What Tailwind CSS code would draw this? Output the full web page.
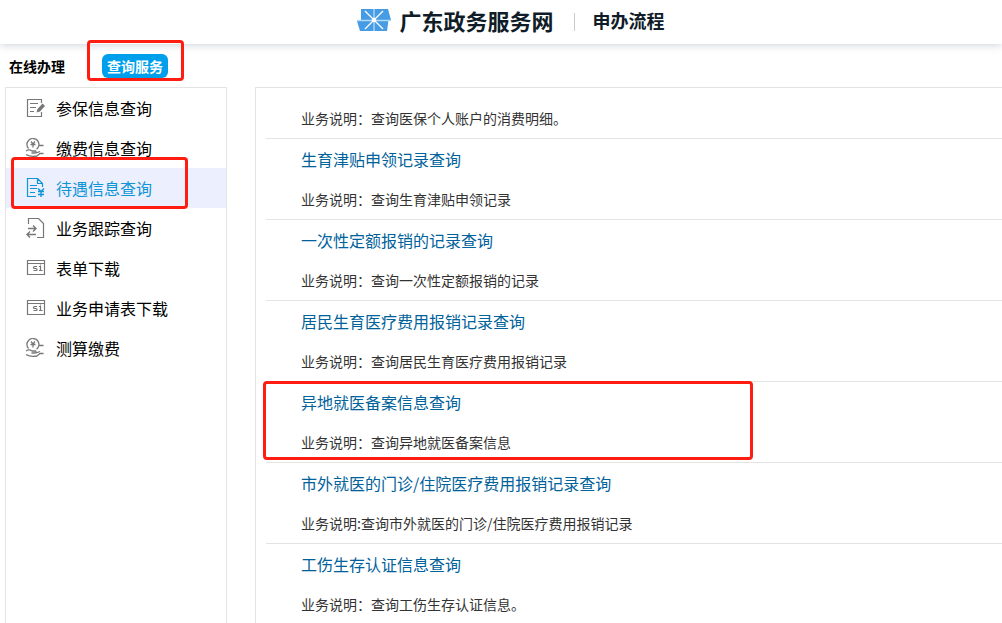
<!DOCTYPE html>
<html lang="zh-CN">
<head>
<meta charset="utf-8">
<meta name="viewport" content="width=device-width, initial-scale=1">
<title>广东政务服务网 - 申办流程</title>
<script src="https://cdn.jsdelivr.net/npm/@tailwindcss/browser@4"></script>
</head>
<body class="flex min-h-screen flex-col bg-white font-['Noto_Sans_CJK_SC',sans-serif] text-black">
<svg class="hidden" aria-hidden="true">
  <symbol id="i-form" viewBox="0 0 20 20">
    <path d="M15.500 5V1.500H1.500V18.500H15.500V14M4 5.500H12M4 9.500H10M4 13.500H8" fill="none" stroke="currentColor" stroke-width="1.200"/>
    <path d="M10.500 14.500L11.500 11L16.500 5.500L19 8L14 13.500Z" fill="currentColor"/>
  </symbol>
  <symbol id="i-pay" viewBox="0 0 20 20">
    <path d="M2.500 10.500A6 6 0 1 1 10.500 11.300M12.500 7.500H17.500M5 3.500L7 6L9 3.500M7 6V9.500M4.500 6.500H9.500" fill="none" stroke="currentColor" stroke-width="1.300"/>
    <path d="M0 13C2 11.500 4 11.500 6 13H9.500C10.500 13.500 10 15 9 15H5.500M10 15L14 13.500M0 16.500C3 18.500 7 18.800 11 18L14 15.500H17.500" fill="none" stroke="currentColor" stroke-width="1.300"/>
  </symbol>
  <symbol id="i-benefit" viewBox="0 0 20 20">
    <path d="M10 18.500H1.500V.5H11.500L16.500 5.500V9M11.500 .5V5.500H16.500M4 7.500H11M4 10.500H11M4 14.500H9" fill="none" stroke="currentColor" stroke-width="1.200"/>
    <path d="M12 10.500L15 13.500L18 10.500M15 13V19M12 13.500H18M12 16.500H18" fill="none" stroke="currentColor" stroke-width="1.400"/>
  </symbol>
  <symbol id="i-track" viewBox="0 0 20 20">
    <path d="M2.500 6V.5H12.500L17.500 5.500V19.500H11" fill="none" stroke="currentColor" stroke-width="1.200"/>
    <path d="M2 10.500H10M7 7.500L10 10.500L7 13.500M10 16.500H1M4 13.500L1 16.500L4 19.500" fill="none" stroke="currentColor" stroke-width="1.400"/>
  </symbol>
  <symbol id="i-sheet" viewBox="0 0 20 20">
    <path d="M1.500 2.500H18.500V16.500H1.500ZM1.500 5.500H18.500" fill="none" stroke="currentColor" stroke-width="1.200"/>
    <path d="M11 8.500H8.500Q7.500 8.500 7.500 9.500T8.500 10.500H10Q11 10.500 11 11.500T10 12.500H7.500M13 8.500H14.500V12.500M13 12.500H16.500M14.500 6.500V7.500" fill="none" stroke="currentColor" stroke-width="1.200"/>
  </symbol>
</svg>

<header class="relative flex h-11 shrink-0 items-center justify-center pb-1 pl-5 text-[#101c28] shadow-[0_1px_8px_rgba(60,70,110,0.25)]">
  <svg class="mr-2 h-[22px] w-[34px] shrink-0" viewBox="0 0 34 22" aria-hidden="true">
    <path d="M4 0H31L34 11H31.500L30 22H3L0 12H4Z" fill="#459be4"/>
    <path d="M17 0V22M0 11.500H34" stroke="#b5daf8" stroke-width="1.300"/>
    <path d="M8 2L26 20M26 2L8 20" stroke="#fff" stroke-width="1.300"/>
    <circle cx="17" cy="11" r="2.200" fill="#fff"/>
  </svg>
  <span class="text-[22px] leading-8 font-bold">广东政务服务网</span>
  <span class="mt-1 mr-[18px] ml-5 h-[18px] w-px bg-[#ccc]"></span>
  <h1 class="text-lg leading-8 font-bold">申办流程</h1>
</header>

<nav class="flex h-[43px] shrink-0 items-center pl-[9px] text-sm font-bold" aria-label="服务类型">
  <button type="button" class="leading-6">在线办理</button>
  <div class="relative ml-[37px]">
    <button type="button" class="block rounded-md bg-[#009fec] px-[5px] leading-6 text-white">查询服务</button>
    <span class="pointer-events-none absolute -top-3.5 -right-4 -bottom-[3px] -left-[15px] rounded-sm border-3 border-[#ff1d12]"></span>
  </div>
</nav>

<main class="flex flex-1 gap-7 pl-[5px]">
  <aside class="w-[222px] shrink-0 border border-b-0 border-[#e3e3e3]">
    <ul class="text-base leading-10">
      <li><a href="#" class="flex items-center gap-2.5 pl-5"><svg class="size-5 text-[#777]" aria-hidden="true"><use href="#i-form"/></svg>参保信息查询</a></li>
      <li><a href="#" class="flex items-center gap-2.5 pl-5"><svg class="size-5 text-[#777]" aria-hidden="true"><use href="#i-pay"/></svg>缴费信息查询</a></li>
      <li class="relative">
        <a href="#" aria-current="page" class="flex items-center gap-2.5 bg-[#eceffe] pl-5 text-[#0f95d6]"><svg class="size-5" aria-hidden="true"><use href="#i-benefit"/></svg>待遇信息查询</a>
        <span class="pointer-events-none absolute -top-[11px] right-[38px] -bottom-px left-[5px] rounded-sm border-3 border-[#ff1d12]"></span>
      </li>
      <li><a href="#" class="flex items-center gap-2.5 pl-5"><svg class="size-5 text-[#777]" aria-hidden="true"><use href="#i-track"/></svg>业务跟踪查询</a></li>
      <li><a href="#" class="flex items-center gap-2.5 pl-5"><svg class="size-5 text-[#777]" aria-hidden="true"><use href="#i-sheet"/></svg>表单下载</a></li>
      <li><a href="#" class="flex items-center gap-2.5 pl-5"><svg class="size-5 text-[#777]" aria-hidden="true"><use href="#i-sheet"/></svg>业务申请表下载</a></li>
      <li><a href="#" class="flex items-center gap-2.5 pl-5"><svg class="size-5 text-[#777]" aria-hidden="true"><use href="#i-pay"/></svg>测算缴费</a></li>
    </ul>
  </aside>

  <section class="min-w-0 flex-1 border-t border-l border-[#e3e3e3] pl-2.5" aria-label="查询服务列表">
    <ul class="text-sm leading-5 text-[#333]">
      <li class="border-b border-[#e3e3e3] pt-2.5 pl-[35px]">
        <p class="py-2.5">业务说明：查询医保个人账户的消费明细。</p>
      </li>
      <li class="border-b border-[#e3e3e3] pl-[35px]">
        <h2 class="text-base leading-10"><a href="#" class="text-[#00629b]">生育津贴申领记录查询</a></h2>
        <p class="py-2.5">业务说明：查询生育津贴申领记录</p>
      </li>
      <li class="border-b border-[#e3e3e3] pl-[35px]">
        <h2 class="text-base leading-10"><a href="#" class="text-[#00629b]">一次性定额报销的记录查询</a></h2>
        <p class="py-2.5">业务说明：查询一次性定额报销的记录</p>
      </li>
      <li class="border-b border-[#e3e3e3] pl-[35px]">
        <h2 class="text-base leading-10"><a href="#" class="text-[#00629b]">居民生育医疗费用报销记录查询</a></h2>
        <p class="py-2.5">业务说明：查询居民生育医疗费用报销记录</p>
      </li>
      <li class="relative border-b border-[#e3e3e3] pl-[35px]">
        <h2 class="text-base leading-10"><a href="#" class="text-[#00629b]">异地就医备案信息查询</a></h2>
        <p class="py-2.5">业务说明：查询异地就医备案信息</p>
        <span class="pointer-events-none absolute -top-px bottom-0.5 -left-[3px] w-[490px] max-w-full rounded-sm border-3 border-[#ff1d12]"></span>
      </li>
      <li class="border-b border-[#e3e3e3] pl-[35px]">
        <h2 class="text-base leading-10"><a href="#" class="text-[#00629b]">市外就医的门诊/住院医疗费用报销记录查询</a></h2>
        <p class="py-2.5">业务说明:查询市外就医的门诊/住院医疗费用报销记录</p>
      </li>
      <li class="pl-[35px]">
        <h2 class="text-base leading-10"><a href="#" class="text-[#00629b]">工伤生存认证信息查询</a></h2>
        <p class="pt-2.5">业务说明：查询工伤生存认证信息。</p>
      </li>
    </ul>
  </section>
</main>
</body>
</html>
